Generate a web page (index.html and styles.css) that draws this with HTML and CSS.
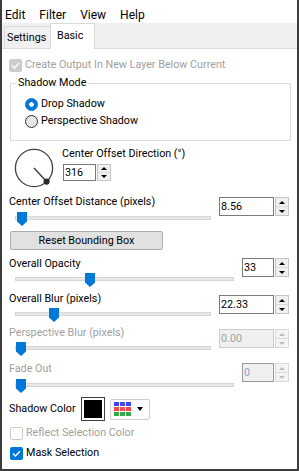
FILE: index.html
```html
<!DOCTYPE html>
<html>
<head>
<meta charset="utf-8">
<link rel="stylesheet" href="styles.css">
</head>
<body>
<div class="win">
  <div class="menubar"><span>Edit</span><span>Filter</span><span>View</span><span>Help</span></div>
  <div class="tabs"><div class="tab">Settings</div><div class="tab active">Basic</div></div>
  <div class="panel">
    <div class="check top disabled"><span class="box on-dis"><svg viewBox="0 0 13 13"><path d="M3 6.6l2.4 2.4 4.6-4.8"/></svg></span>Create Output In New Layer Below Current</div>

    <fieldset class="group">
      <legend>Shadow Mode</legend>
      <div class="radio first"><span class="dot on"></span>Drop Shadow</div>
      <div class="radio second"><span class="dot"></span>Perspective Shadow</div>
    </fieldset>

    <div class="dialrow">
      <svg class="dial" width="40" height="40" viewBox="0 0 40 40">
        <circle cx="20" cy="20" r="18.6" fill="none" stroke="#3f3f3f" stroke-width="1.3"/>
        <line x1="20" y1="20" x2="32.5" y2="33.4" stroke="#3f3f3f" stroke-width="1.4"/>
        <circle cx="32.6" cy="33.6" r="3.1" fill="#2a2a2a"/>
      </svg>
      <div class="dialctl">
        <div class="lbl">Center Offset Direction (°)</div>
        <div class="spin dialspin"><div class="field">316</div><div class="btns"><span class="up"></span><span class="dn"></span></div></div>
      </div>
    </div>

    <div class="sec s1">
      <div class="left">
        <div class="lbl">Center Offset Distance (pixels)</div>
        <div class="slider short"><div class="track"></div><div class="thumb" style="left:8px"></div></div>
      </div>
      <div class="spin wide"><div class="field">8.56</div><div class="btns"><span class="up"></span><span class="dn"></span></div></div>
    </div>

    <div class="button">Reset Bounding Box</div>

    <div class="sec s2">
      <div class="left">
        <div class="lbl">Overall Opacity</div>
        <div class="slider long"><div class="track"></div><div class="thumb" style="left:76px"></div></div>
      </div>
      <div class="spin narrow"><div class="field">33</div><div class="btns"><span class="up"></span><span class="dn"></span></div></div>
    </div>

    <div class="sec s3">
      <div class="left">
        <div class="lbl">Overall Blur (pixels)</div>
        <div class="slider short"><div class="track"></div><div class="thumb" style="left:40px"></div></div>
      </div>
      <div class="spin wide"><div class="field">22.33</div><div class="btns"><span class="up"></span><span class="dn"></span></div></div>
    </div>

    <div class="sec s4">
      <div class="left">
        <div class="lbl dim">Perspective Blur (pixels)</div>
        <div class="slider short"><div class="track"></div><div class="thumb" style="left:7px"></div></div>
      </div>
      <div class="spin wide dis"><div class="field">0.00</div><div class="btns"><span class="up"></span><span class="dn"></span></div></div>
    </div>

    <div class="sec s5">
      <div class="left">
        <div class="lbl dim">Fade Out</div>
        <div class="slider long"><div class="track"></div><div class="thumb" style="left:7px"></div></div>
      </div>
      <div class="spin narrow dis fade"><div class="field">0</div><div class="btns"><span class="up"></span><span class="dn"></span></div></div>
    </div>

    <div class="colorrow">
      <span class="clabel">Shadow Color</span>
      <span class="swatch"></span>
      <span class="palette">
        <svg width="17" height="15" viewBox="0 0 17 15">
          <rect x="0" y="0" width="5" height="4" fill="#3c46f0"/><rect x="6" y="0" width="5" height="4" fill="#4a4ae6"/><rect x="12" y="0" width="5" height="4" fill="#3c46f0"/>
          <rect x="0" y="5" width="5" height="4" fill="#f0484a"/><rect x="6" y="5" width="5" height="4" fill="#ee4e52"/><rect x="12" y="5" width="5" height="4" fill="#f0484a"/>
          <rect x="0" y="10" width="5" height="4" fill="#36a84a"/><rect x="6" y="10" width="5" height="4" fill="#3aa84e"/><rect x="12" y="10" width="5" height="4" fill="#36a84a"/>
        </svg>
        <span class="caret"></span>
      </span>
    </div>

    <div class="check reflect disabled"><span class="box off-dis"></span>Reflect Selection Color</div>
    <div class="check mask"><span class="box on"><svg viewBox="0 0 13 13"><path d="M3 6.6l2.4 2.4 4.6-4.8"/></svg></span>Mask Selection</div>
  </div>
</div>
</body>
</html>
```

FILE: styles.css
```css
* { box-sizing: border-box; margin: 0; padding: 0; }
html, body { background: #fff; }
body {
  margin: 0;
  font-family: Roboto, "Liberation Sans", sans-serif;
  font-size: 10.75px;
  line-height: 14px;
  color: #000;
}
.win {
  width: 299px;
  height: 471px;
  border: 2px solid #3c3c3c;
  border-top: 0;
  background: #fff;
  display: flex;
  flex-direction: column;
  overflow: hidden;
}
.menubar {
  display: flex;
  gap: 14px;
  height: 23px;
  padding: 8px 0 1px 3px;
  font-size: 12px;
  line-height: 14px;
}
.tabs {
  display: flex;
  align-items: flex-end;
  height: 26px;
  background: #f0f0f0;
  border-bottom: 1px solid #d9d9d9;
  flex-shrink: 0;
}
.tab {
  height: 22px;
  width: 47px;
  margin-left: 2px;
  padding: 4px 0 0 2px;
  border: 1px solid #d9d9d9;
  border-bottom: 0;
  background: #f0f0f0;
  white-space: nowrap;
}
.tab.active {
  height: 26px;
  width: 45px;
  margin-left: -1px;
  margin-bottom: -1px;
  padding: 5px 0 0 6px;
  background: #fff;
  position: relative;
}
.panel {
  display: flex;
  flex-direction: column;
  align-items: flex-start;
  padding: 0 8px 0 7px;
  flex: 1;
}
.check {
  display: flex;
  align-items: center;
  gap: 3px;
  height: 14px;
  white-space: nowrap;
}
.check.top { margin-top: 9px; }
.check.reflect { margin-top: 5px; margin-left: 1px; }
.check.mask { margin-top: 6px; margin-left: 1px; }
.disabled, .dim { color: #a0a0a0; }
.box {
  width: 13px;
  height: 13px;
  border-radius: 2px;
  display: block;
  flex-shrink: 0;
}
.box svg { width: 13px; height: 13px; display: block; }
.box path { fill: none; stroke: #fff; stroke-width: 1.4; }
.box.on-dis { background: #cccccc; }
.box.off-dis { border: 1px solid #cccccc; background: #fff; }
.box.on { background: #0078d7; }

.group {
  margin: 4px 0 0 1px;
  width: 281px;
  border: 1px solid #dcdcdc;
  padding: 0 0 12px 5px;
  min-width: 0;
}
.group legend {
  padding: 0 2px;
  line-height: 14px;
}
.radio {
  display: flex;
  align-items: center;
  gap: 3px;
  height: 14px;
  margin-left: 9px;
}
.radio.first { margin-top: 7px; }
.radio.second { margin-top: 3px; }
.dot {
  width: 13px;
  height: 13px;
  border-radius: 50%;
  border: 1px solid #333;
  background: #e6e6e6;
  flex-shrink: 0;
}
.dot.on {
  border-color: #0078d7;
  background: radial-gradient(circle, #fff 0 2px, #0078d7 2.6px);
}

.dialrow {
  display: flex;
  margin-top: 6px;
  height: 41px;
}
.dial { margin: 1px 0 0 5px; display: block; }
.dialctl { margin-left: 8px; }
.dialspin { margin: 3px 0 0 1px; }

.lbl { height: 14px; white-space: nowrap; }

.sec {
  display: flex;
  justify-content: space-between;
  align-items: flex-start;
  width: 100%;
}
.left { display: flex; flex-direction: column; }
.slider {
  position: relative;
  height: 14px;
}
.slider.short { width: 202px; }
.slider.long { width: 225px; }
.track {
  position: absolute;
  left: 6px;
  right: 0;
  top: 5px;
  height: 4px;
  background: #e7e7e7;
  border: 1px solid #d6d6d6;
}
.thumb {
  position: absolute;
  top: 1px;
  width: 10px;
  height: 14px;
  background: #0078d7;
  clip-path: polygon(0 0, 100% 0, 100% 68%, 50% 100%, 0 68%);
}

.s1 { margin-top: 7px; }
.s1 .slider { margin-top: 2px; }
.s1 .spin { margin-top: 2px; }
.s2 { margin-top: 7px; }
.s2 .slider { margin-top: 1px; }
.s2 .spin { margin-top: 1px; }
.s3 { margin-top: 6px; }
.s3 .slider { margin-top: 1px; }
.s3 .spin { margin-top: 3px; }
.s4 { margin-top: 5px; }
.s4 .slider { margin-top: 1px; }
.s4 .spin { margin-top: 3px; }
.s5 { margin-top: 7px; }
.s5 .slider { margin-top: 2px; }
.s5 .spin { margin-top: 1px; }

.spin {
  display: flex;
  gap: 1px;
  height: 19px;
}
.spin .field {
  border: 1px solid #7a7a7a;
  background: #fff;
  padding-left: 1px;
  line-height: 17px;
  height: 100%;
}
.spin.wide .field { width: 55px; }
.spin.narrow .field { width: 32px; }
.dialspin { height: 17px; }
.dialspin .field { width: 33px; line-height: 15px; }
.btns {
  width: 14px;
  display: flex;
  flex-direction: column;
  border: 1px solid #c4c4c4;
  background: #f0f0f0;
}
.btns span {
  flex: 1;
  display: flex;
  align-items: center;
  justify-content: center;
}
.btns span + span { border-top: 1px solid #dadada; }
.btns span::after {
  content: "";
  border-left: 3px solid transparent;
  border-right: 3px solid transparent;
}
.btns .up::after { border-bottom: 3px solid #000; }
.btns .dn::after { border-top: 3px solid #000; }
.spin.dis .field {
  background: #f0f0f0;
  border-color: #cccccc;
  color: #a0a0a0;
}
.spin.fade .field { border-color: #9a9a9a; color: #8ea6c8; }
.spin.dis .btns { border-color: #dadada; background: #f4f4f4; }
.spin.dis .btns .up::after { border-bottom-color: #bcbcbc; }
.spin.dis .btns .dn::after { border-top-color: #bcbcbc; }

.button {
  margin: 6px 0 0 1px;
  width: 153px;
  height: 19px;
  border: 1px solid #adadad;
  border-radius: 2px;
  background: #e1e1e1;
  text-align: center;
  line-height: 17px;
}

.colorrow {
  display: flex;
  align-items: center;
  height: 24px;
  margin-top: 5px;
}
.clabel { width: 72px; white-space: nowrap; }
.swatch {
  width: 24px;
  height: 24px;
  border: 1px solid #404040;
  background: #000;
  box-shadow: inset 0 0 0 2px #fff;
}
.palette {
  margin-left: 5px;
  width: 40px;
  height: 21px;
  border: 1px solid #cfcfcf;
  border-radius: 2px;
  background: #fcfcfc;
  display: flex;
  align-items: center;
  padding-left: 3px;
}
.palette svg { display: block; }
.caret {
  margin-left: 6px;
  border-left: 3.5px solid transparent;
  border-right: 3.5px solid transparent;
  border-top: 4px solid #000;
}
```
